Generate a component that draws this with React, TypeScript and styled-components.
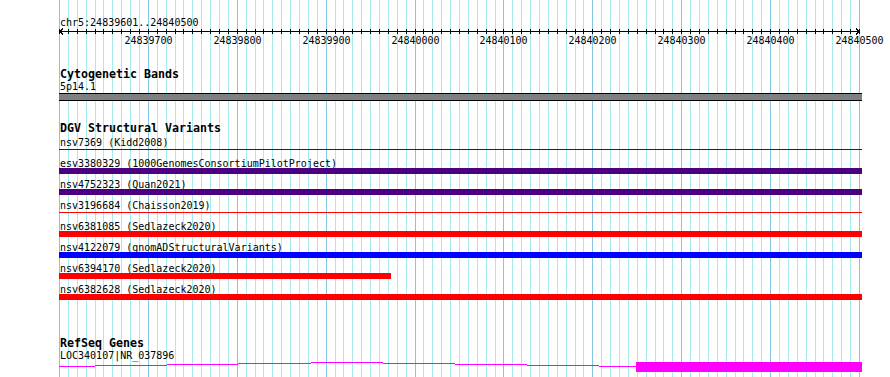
import React, { FC } from "react";
import styled, { createGlobalStyle } from "styled-components";

// view: chr5:24839600..24840500 drawn over 800px starting at x=59
const VIEW_START = 24839600;
const SCALE = 800 / 900;
const LANE_WIDTH = 803;
const PAGE_W = 890;
const PAGE_H = 377;
const ORIGIN = 59;

const toX = (pos: number) => Math.round((pos - VIEW_START) * SCALE);

const GlobalStyle = createGlobalStyle`
  html, body {
    margin: 0;
    padding: 0;
    background: #ffffff;
  }
`;

const Page = styled.div`
  position: relative;
  width: ${PAGE_W}px;
  height: ${PAGE_H}px;
  overflow: hidden;
  background: #ffffff;
  color: #000000;
  font-family: "DejaVu Sans Mono", "Liberation Mono", monospace;
`;

const GridLayer = styled.svg`
  position: absolute;
  left: 0;
  top: 0;
`;

const Panel = styled.div`
  position: relative;
  display: flex;
  flex-direction: column;
  width: ${LANE_WIDTH}px;
  padding-left: ${ORIGIN}px;
`;

const SmallText = styled.div<{ $gap?: number; $h?: number }>`
  margin-top: ${(p) => p.$gap ?? 0}px;
  height: ${(p) => p.$h ?? 11}px;
  padding-left: 1px;
  font-size: 10px;
  line-height: 11px;
  white-space: nowrap;
`;

const TrackTitle = styled.div<{ $gap: number }>`
  margin-top: ${(p) => p.$gap}px;
  height: 12px;
  padding-left: 1px;
  font-size: 11.63px;
  font-weight: bold;
  line-height: 12px;
  white-space: nowrap;
`;

const Axis = styled.svg`
  display: block;
  overflow: visible;
`;

const AxisLabel = styled.text`
  font-family: "DejaVu Sans Mono", "Liberation Mono", monospace;
  font-size: 10px;
  fill: #000000;
  text-anchor: middle;
`;

const BandBar = styled.div`
  margin-top: 1px;
  box-sizing: border-box;
  width: ${LANE_WIDTH}px;
  height: 8px;
  border-top: 1px solid #000000;
  border-bottom: 1px solid #000000;
  background: #808080;
`;

const VariantList = styled.div`
  display: flex;
  flex-direction: column;
  margin-top: 3px;
`;

const VariantRow = styled.div`
  display: flex;
  flex-direction: column;
  margin-bottom: 5px;
`;

const Lane = styled.div`
  display: flex;
  flex-direction: column;
  height: 6px;
`;

const Bar = styled.div<{ $color: string; $thin?: boolean }>`
  height: ${(p) => (p.$thin ? 1 : 6)}px;
  margin-top: ${(p) => (p.$thin ? 2 : 0)}px;
  background: ${(p) => p.$color};
`;

const GeneLane = styled.svg`
  display: block;
`;

type Variant = { id: string; src: string; color: string; thin?: boolean; end?: number };

const variants: Variant[] = [
  { id: "nsv7369", src: "Kidd2008", color: "#4b0082", thin: true },
  { id: "esv3380329", src: "1000GenomesConsortiumPilotProject", color: "#4b0082" },
  { id: "nsv4752323", src: "Quan2021", color: "#4b0082" },
  { id: "nsv3196684", src: "Chaisson2019", color: "#ff0000", thin: true },
  { id: "nsv6381085", src: "Sedlazeck2020", color: "#ff0000" },
  { id: "nsv4122079", src: "gnomADStructuralVariants", color: "#0000ff" },
  { id: "nsv6394170", src: "Sedlazeck2020", color: "#ff0000", end: 24839973.5 },
  { id: "nsv6382628", src: "Sedlazeck2020", color: "#ff0000" },
];

// grid / tick positions every 10bp
const ticks = Array.from({ length: 91 }, (_, k) => ({
  x: Math.round((k * 80) / 9),
  major: k % 10 === 0,
  pos: VIEW_START + k * 10,
}));

// intron of the gene, drawn as a stepped hat (local x1, x2, y)
const intron: [number, number, number][] = [
  [0, 36, 4],
  [36, 108, 3],
  [108, 179, 2],
  [179, 252, 1],
  [252, 324, 0],
  [324, 396, 1],
  [396, 468, 2],
  [468, 540, 3],
  [540, 577, 4],
];

const Grid: FC = () => (
  <GridLayer width={PAGE_W} height={PAGE_H} shapeRendering="crispEdges">
    {ticks.map((t) => (
      <rect
        key={t.pos}
        x={ORIGIN + t.x}
        y={0}
        width={1}
        height={PAGE_H}
        fill={t.major ? "#84c6e6" : "#a8ebee"}
      />
    ))}
  </GridLayer>
);

const Ruler: FC = () => (
  <>
    <SmallText $gap={17} $h={10}>chr5:24839601..24840500</SmallText>
    <Axis width={LANE_WIDTH} height={20} shapeRendering="crispEdges">
      <rect x={1} y={4} width={800} height={1} fill="#000" />
      {ticks.map((t) => (
        <rect key={t.pos} x={t.x} y={2} width={1} height={5} fill="#000" />
      ))}
      <polyline points="4,1.5 1,4.5 4,7.5" fill="none" stroke="#000" strokeWidth={1} />
      <polyline points="797,1.5 800,4.5 797,7.5" fill="none" stroke="#000" strokeWidth={1} />
      {ticks
        .filter((t) => t.major && t.pos > VIEW_START)
        .map((t) => (
          <AxisLabel key={t.pos} x={t.x + 0.5} y={17}>
            {t.pos}
          </AxisLabel>
        ))}
    </Axis>
  </>
);

export default function App() {
  return (
    <Page>
      <GlobalStyle />
      <Grid />
      <Panel>
        <Ruler />

        <TrackTitle $gap={21}>Cytogenetic Bands</TrackTitle>
        <SmallText $gap={1}>5p14.1</SmallText>
        <BandBar />

        <TrackTitle $gap={21}>DGV Structural Variants</TrackTitle>
        <VariantList>
          {variants.map((v) => (
            <VariantRow key={v.id}>
              <SmallText $h={10}>
                {v.id} ({v.src})
              </SmallText>
              <Lane>
                <Bar
                  $color={v.color}
                  $thin={v.thin}
                  style={{ width: v.end ? toX(v.end) : LANE_WIDTH }}
                />
              </Lane>
            </VariantRow>
          ))}
        </VariantList>

        <TrackTitle $gap={32}>RefSeq Genes</TrackTitle>
        <SmallText $gap={1} $h={12}>LOC340107|NR_037896</SmallText>
        <GeneLane width={LANE_WIDTH} height={10} shapeRendering="crispEdges">
          {intron.map(([x1, x2, y]) => (
            <rect key={x1} x={x1} y={y} width={x2 - x1} height={1} fill="#ff00ff" />
          ))}
          <rect x={577} y={0} width={226} height={10} fill="#ff00ff" />
        </GeneLane>
      </Panel>
    </Page>
  );
}
